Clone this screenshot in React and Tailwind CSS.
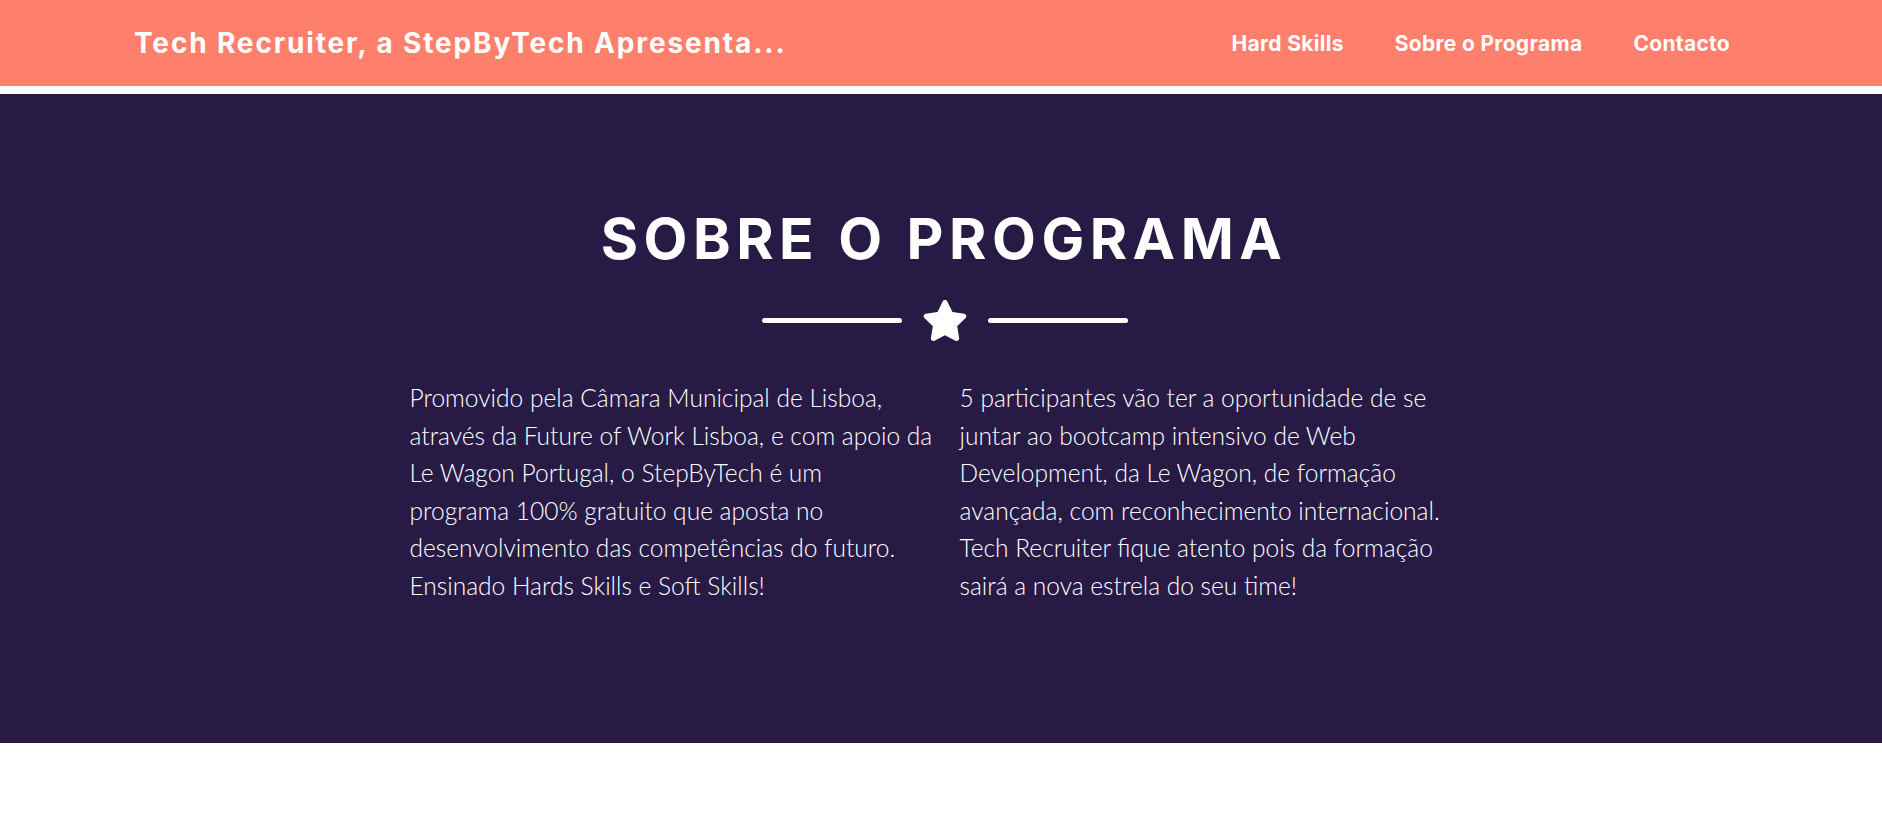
import React from "react";

function Star() {
  return (
    <svg width="46" height="41" viewBox="0 0 576 512" className="block" aria-hidden="true">
      <path
        fill="#ffffff"
        d="M259.3 17.8L194 150.2 47.9 171.5c-26.2 3.8-36.7 36.1-17.7 54.6l105.7 103-25 145.5c-4.5 26.3 23.2 46 46.4 33.7L288 439.6l130.7 68.7c23.2 12.2 50.9-7.4 46.4-33.7l-25-145.5 105.7-103c19-18.5 8.5-50.8-17.7-54.6L382 150.2 316.7 17.8c-11.7-23.6-45.6-23.9-57.4 0z"
      />
    </svg>
  );
}

export default function App() {
  const head = { fontFamily: "Inter, 'DejaVu Sans', sans-serif" };
  const body = { fontFamily: "Lato, 'Open Sans', sans-serif" };
  return (
    <div className="min-h-[825px] bg-white">
      <nav className="h-[86px] bg-[#ff7f6d] flex items-center pl-[134px] pr-[152px]" style={head}>
        <a className="text-white font-bold text-[28px] leading-none tracking-[1.85px]">
          Tech Recruiter, a StepByTech Apresenta...
        </a>
        <ul className="ml-auto flex items-center gap-[51px] text-white font-bold text-[21px] leading-none tracking-[0.3px]">
          <li>Hard Skills</li>
          <li>Sobre o Programa</li>
          <li>Contacto</li>
        </ul>
      </nav>
      <div className="h-[8px] bg-white" />
      <section className="bg-[#271b46] pt-[111px] h-[649px]">
        <h2
          className="text-center text-white font-bold text-[57px] leading-[1.2] tracking-[5.5px] pl-[6px]"
          style={head}
        >
          SOBRE O PROGRAMA
        </h2>
        <div className="mt-[27px] ml-[7px] flex items-center justify-center">
          <div className="w-[140px] h-[5px] rounded-full bg-white" />
          <div className="mx-[20px]">
            <Star />
          </div>
          <div className="w-[140px] h-[5px] rounded-full bg-white" />
        </div>
        <div
          className="mt-[38px] flex justify-center gap-[37px] text-white font-light text-[24.55px] leading-[37.5px]"
          style={body}
        >
          <p className="w-[513px] whitespace-nowrap">
            Promovido pela Câmara Municipal de Lisboa,<br />
            através da Future of Work Lisboa, e com apoio da<br />
            Le Wagon Portugal, o StepByTech é um<br />
            programa 100% gratuito que aposta no<br />
            desenvolvimento das competências do futuro.<br />
            Ensinado Hards Skills e Soft Skills!
          </p>
          <p className="w-[513px] whitespace-nowrap">
            5 participantes vão ter a oportunidade de se<br />
            juntar ao bootcamp intensivo de Web<br />
            Development, da Le Wagon, de formação<br />
            avançada, com reconhecimento internacional.<br />
            Tech Recruiter fique atento pois da formação<br />
            sairá a nova estrela do seu time!
          </p>
        </div>
      </section>
    </div>
  );
}
